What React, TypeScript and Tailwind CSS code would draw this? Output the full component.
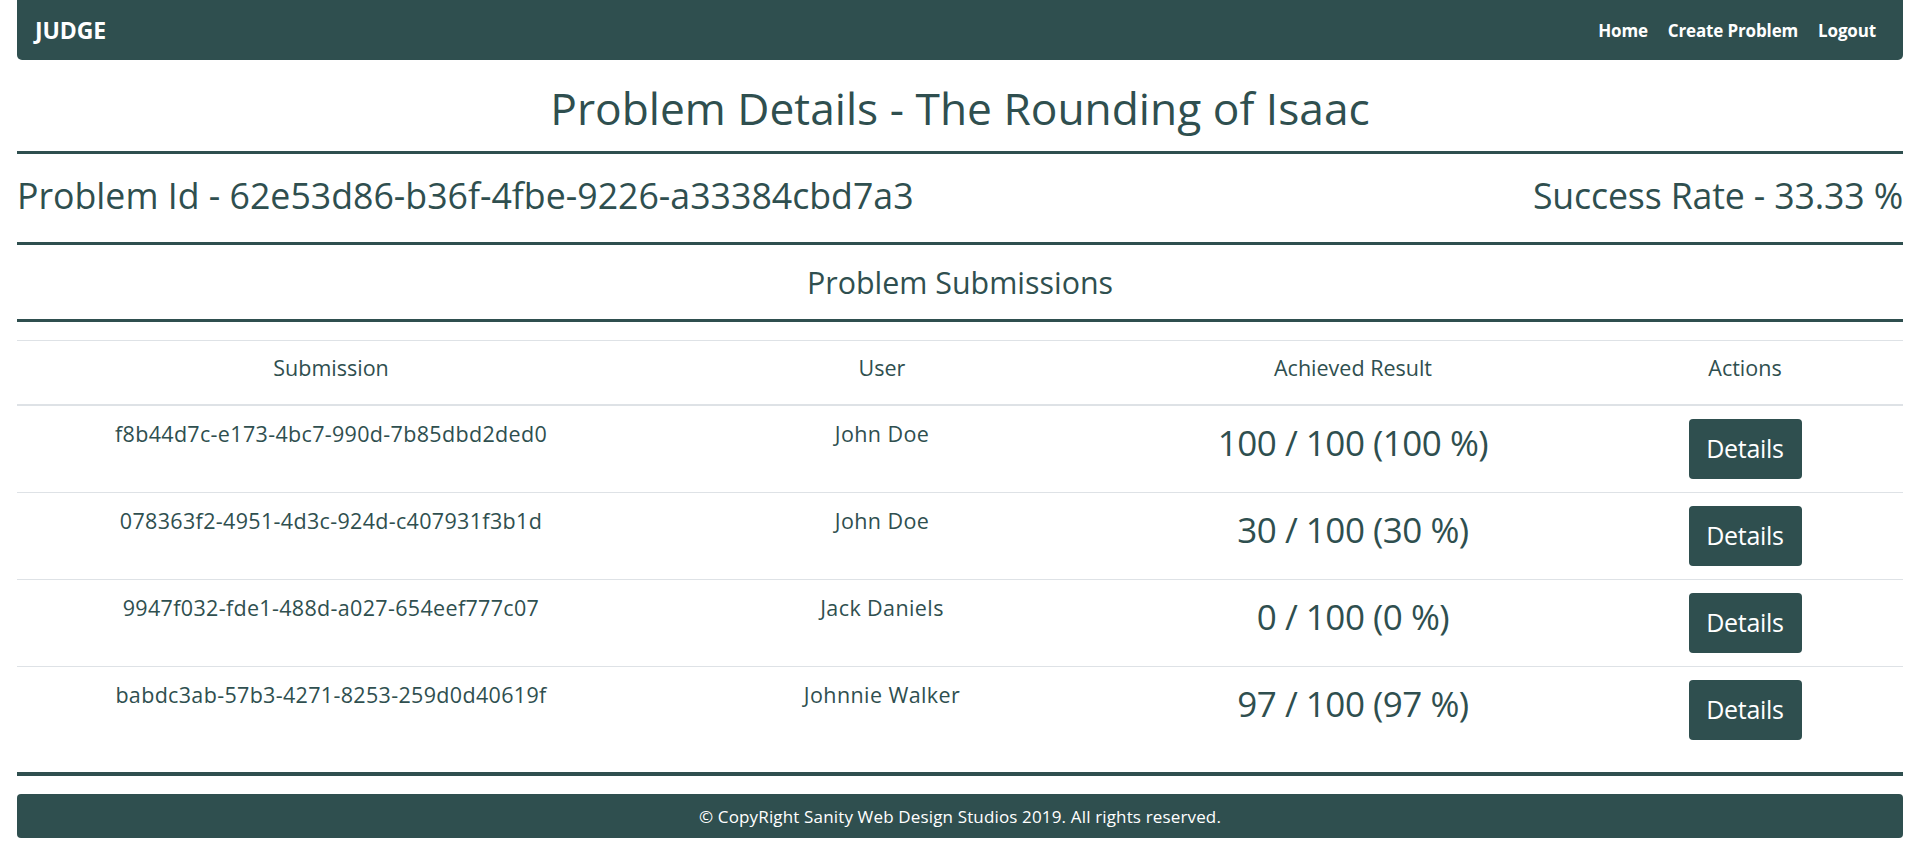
import React from "react";

const rows = [
  { id: "f8b44d7c-e173-4bc7-990d-7b85dbd2ded0", user: "John Doe", result: "100 / 100 (100 %)" },
  { id: "078363f2-4951-4d3c-924d-c407931f3b1d", user: "John Doe", result: "30 / 100 (30 %)" },
  { id: "9947f032-fde1-488d-a027-654eef777c07", user: "Jack Daniels", result: "0 / 100 (0 %)" },
  { id: "babdc3ab-57b3-4271-8253-259d0d40619f", user: "Johnnie Walker", result: "97 / 100 (97 %)" },
];

export default function App() {
  return (
    <div
      className="min-h-[859px] w-full bg-white text-[#2f4f4f] pl-[17px] pr-[15px]"
      style={{ fontFamily: '"Open Sans", "Noto Sans", sans-serif' }}
    >
      {/* Navbar */}
      <nav className="h-[60px] bg-[#2f4f4f] rounded-b-[5px] flex items-center justify-between pl-[18px] pr-[27px]">
        <span className="text-white font-bold text-[23px] leading-none tracking-[-0.1px]">JUDGE</span>
        <div className="flex items-center gap-[20px] text-white font-bold text-[17px] leading-none tracking-[-0.15px]">
          <span>Home</span>
          <span>Create Problem</span>
          <span>Logout</span>
        </div>
      </nav>

      {/* Title */}
      <div className="h-[91px] flex items-center justify-center pt-[6px]">
        <h1 className="text-[44.3px] leading-[1.2] font-normal">
          Problem Details - The Rounding of Isaac
        </h1>
      </div>
      <div className="h-[3px] bg-[#2f4f4f]" />

      {/* Problem id / success rate */}
      <div className="h-[88px] flex items-center justify-between pb-[6px]">
        <h2 className="text-[35.7px] leading-[1.2] font-normal">
          Problem Id - 62e53d86-b36f-4fbe-9226-a33384cbd7a3
        </h2>
        <h2 className="text-[35.7px] leading-[1.2] font-normal tracking-[-0.15px]">
          Success Rate - 33.33 %
        </h2>
      </div>
      <div className="h-[3px] bg-[#2f4f4f]" />

      {/* Submissions heading */}
      <div className="h-[74px] flex items-center justify-center pt-[3px]">
        <h3 className="text-[30.4px] leading-[1.2] font-normal">Problem Submissions</h3>
      </div>
      <div className="h-[3px] bg-[#2f4f4f]" />

      {/* Table */}
      <table className="mt-[18px] w-[1886px] table-fixed border-collapse">
        <colgroup>
          <col className="w-[628px]" />
          <col className="w-[474px]" />
          <col className="w-[468px]" />
          <col className="w-[316px]" />
        </colgroup>
        <thead>
          <tr className="border-t border-[#dee2e6] border-b-2">
            {["Submission", "User", "Achieved Result", "Actions"].map((h) => (
              <th
                key={h}
                className="h-[64px] align-top pt-[12px] text-center font-normal text-[21.5px] leading-[30px]"
              >
                {h}
              </th>
            ))}
          </tr>
        </thead>
        <tbody>
          {rows.map((r, i) => (
            <tr key={r.id} className={i === 0 ? "" : "border-t border-[#dee2e6]"}>
              <td className="align-top text-center py-[13px] text-[21.5px] leading-[30px] tracking-[0.33px]">
                {r.id}
              </td>
              <td className="align-top text-center py-[13px] text-[21.5px] leading-[30px] tracking-[0.4px]">
                {r.user}
              </td>
              <td className="align-top text-center py-[13px]">
                <div className="mt-[3px] text-[35px] leading-[42px] tracking-[-0.5px]">{r.result}</div>
              </td>
              <td className="align-top text-center py-[13px]">
                <button className="h-[60px] w-[113px] rounded-[4px] bg-[#2f4f4f] text-white text-[25px] leading-none tracking-[-0.3px]">
                  Details
                </button>
              </td>
            </tr>
          ))}
        </tbody>
      </table>

      <div className="mt-[19px] h-[4px] bg-[#2f4f4f]" />

      {/* Footer */}
      <footer className="mt-[18px] h-[44px] bg-[#2f4f4f] rounded-[4px] flex items-center justify-center pt-[2px]">
        <span className="text-white text-[17px] leading-none tracking-[0.15px]">
          © CopyRight Sanity Web Design Studios 2019. All rights reserved.
        </span>
      </footer>
    </div>
  );
}
